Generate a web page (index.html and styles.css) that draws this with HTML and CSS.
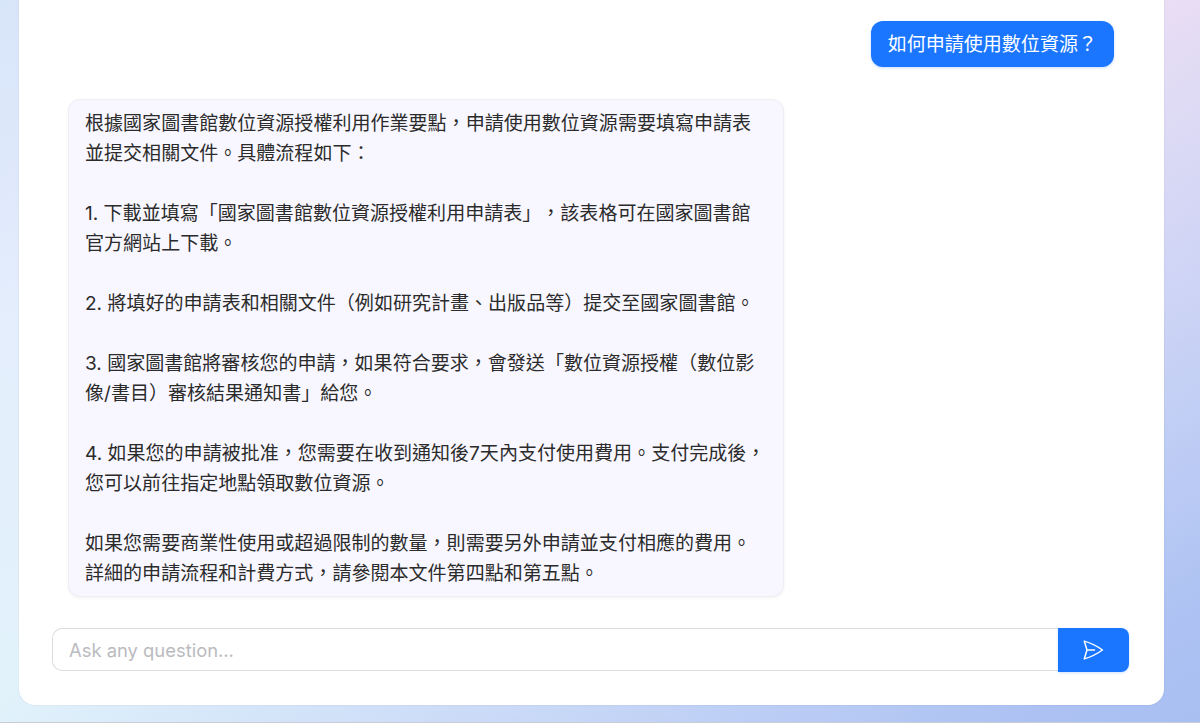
FILE: index.html
```html
<!DOCTYPE html>
<html lang="zh-Hant">
<head>
<meta charset="utf-8">
<title>Chat</title>
<link rel="stylesheet" href="styles.css">
</head>
<body>
<main class="card">
  <section class="messages">
    <div class="bubble user">如何申請使用數位資源？</div>
    <div class="bubble bot">根據國家圖書館數位資源授權利用作業要點，申請使用數位資源需要填寫申請表並提交相關文件。具體流程如下：

1. 下載並填寫「國家圖書館數位資源授權利用申請表」，該表格可在國家圖書館官方網站上下載。

2. 將填好的申請表和相關文件（例如研究計畫、出版品等）提交至國家圖書館。

3. 國家圖書館將審核您的申請，如果符合要求，會發送「數位資源授權（數位影像/書目）審核結果通知書」給您。

4. 如果您的申請被批准，您需要在收到通知後7天內支付使用費用。支付完成後，您可以前往指定地點領取數位資源。

如果您需要商業性使用或超過限制的數量，則需要另外申請並支付相應的費用。詳細的申請流程和計費方式，請參閱本文件第四點和第五點。</div>
  </section>
  <form class="composer">
    <input class="field" type="text" placeholder="Ask any question...">
    <button class="send" type="button" aria-label="Send">
      <svg class="send-icon" viewBox="0 0 24 24" fill="none" stroke="currentColor" stroke-width="1.5" stroke-linecap="round" stroke-linejoin="round"><path d="M6 12 3.269 3.125A59.769 59.769 0 0 1 21.485 12 59.768 59.768 0 0 1 3.27 20.875L5.999 12Zm0 0h7.5"/></svg>
    </button>
  </form>
</main>
</body>
</html>
```
FILE: styles.css
```css
* { box-sizing: border-box; }
html, body { margin: 0; height: 723px; overflow: hidden; }
body {
  padding: 0 36px 17px 19px;
  background:
    linear-gradient(to bottom right, rgba(212, 228, 249, .8), rgba(212, 228, 249, 0) 22%),
    linear-gradient(to bottom right, rgba(170, 192, 242, 0) 48%, rgba(170, 192, 242, .5) 73%, rgba(170, 192, 242, .95) 92%, #a9bff2 100%),
    linear-gradient(to top right, #e2f3fb 0%, #e5e9fc 50%, #eadef4 100%);
  border-bottom: 1px solid #c9ccd3;
  font-family: Inter, "Noto Sans CJK TC", sans-serif;
  color: #2b2b2b;
  text-spacing-trim: space-all;
}
.card {
  height: 705px;
  display: flex;
  flex-direction: column;
  padding: 21px 35px 34px 33px;
  background: #fff;
  border-radius: 0 0 16px 16px;
  box-shadow: 0 0 2px rgba(60, 70, 100, .14);
}
.messages {
  display: flex;
  flex-direction: column;
  gap: 32px;
  padding: 0 15px 0 16px;
}
.bubble {
  padding: 9px 16px 7px;
  font-size: 19.05px;
  line-height: 30px;
}
.user {
  align-self: flex-end;
  padding-left: 17px;
  padding-right: 17px;
  background: #1a76ff;
  color: #fff;
  border-radius: 12px;
  box-shadow: 0 1px 3px rgba(26, 118, 255, .25);
}
.bot {
  align-self: flex-start;
  width: 716px;
  padding-right: 14px;
  white-space: pre-line;
  background: #f8f7ff;
  border: 1px solid #eeeef3;
  border-radius: 12px;
  box-shadow: 0 1px 3px rgba(0, 0, 0, .06);
}
.composer {
  display: flex;
  margin-top: 31px;
}
.field {
  flex: 1;
  height: 43px;
  padding: 0 16px;
  border: 1px solid #dcdcdc;
  border-right: 0;
  border-radius: 10px 0 0 10px;
  font: 18.4px Inter, "Noto Sans CJK TC", sans-serif;
  outline: none;
}
.field::placeholder { color: #bbbbbf; }
.send {
  width: 71px;
  height: 44px;
  padding: 0;
  display: flex;
  align-items: center;
  justify-content: center;
  background: #1a76ff;
  color: #fff;
  border: 0;
  border-radius: 0 8px 8px 0;
  box-shadow: 0 1px 3px rgba(26, 118, 255, .2);
}
.send-icon { width: 24px; height: 24px; margin-left: -1px; }
```
